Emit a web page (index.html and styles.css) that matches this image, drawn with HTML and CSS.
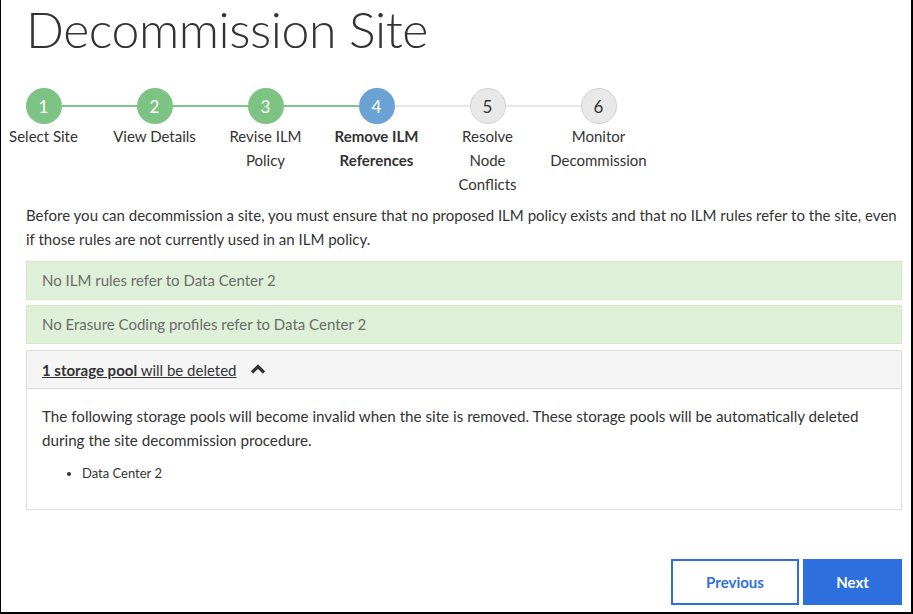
FILE: index.html
```html
<!DOCTYPE html>
<html lang="en">
<head>
<meta charset="utf-8">
<title>Decommission Site</title>
<link rel="stylesheet" href="styles.css">
</head>
<body>
<div class="frame">
  <h1 class="title">Decommission Site</h1>

  <div class="stepper">
    <div class="step done first">
      <div class="track"><span class="seg green"></span><span class="dot">1</span><span class="seg green"></span></div>
      <div class="label">Select Site</div>
    </div>
    <div class="step done">
      <div class="track"><span class="seg green"></span><span class="dot">2</span><span class="seg green"></span></div>
      <div class="label">View Details</div>
    </div>
    <div class="step done">
      <div class="track"><span class="seg green"></span><span class="dot">3</span><span class="seg green"></span></div>
      <div class="label">Revise ILM<br>Policy</div>
    </div>
    <div class="step current">
      <div class="track"><span class="seg green"></span><span class="dot">4</span><span class="seg gray"></span></div>
      <div class="label">Remove ILM<br>References</div>
    </div>
    <div class="step todo">
      <div class="track"><span class="seg gray"></span><span class="dot">5</span><span class="seg gray"></span></div>
      <div class="label">Resolve<br>Node<br>Conflicts</div>
    </div>
    <div class="step todo last">
      <div class="track"><span class="seg gray"></span><span class="dot">6</span><span class="seg"></span></div>
      <div class="label">Monitor<br>Decommission</div>
    </div>
  </div>

  <p class="intro">Before you can decommission a site, you must ensure that no proposed ILM policy exists and that no ILM rules refer to the site, even if those rules are not currently used in an ILM policy.</p>

  <div class="alert">No ILM rules refer to Data Center 2</div>
  <div class="alert">No Erasure Coding profiles refer to Data Center 2</div>

  <div class="panel">
    <div class="panel-head">
      <span class="toggle"><b>1 storage pool</b> will be deleted</span>
      <svg class="chev" width="16" height="12" viewBox="0 0 16 12" aria-hidden="true"><path d="M2 9.5 L8 3.5 L14 9.5" fill="none" stroke="#333" stroke-width="3.2" stroke-linecap="butt" stroke-linejoin="miter"/></svg>
    </div>
    <div class="panel-body">
      <p>The following storage pools will become invalid when the site is removed. These storage pools will be automatically deleted during the site decommission procedure.</p>
      <ul class="pools">
        <li>Data Center 2</li>
      </ul>
    </div>
  </div>

  <div class="actions">
    <button class="btn btn-outline">Previous</button>
    <button class="btn btn-primary">Next</button>
  </div>
</div>
</body>
</html>
```

FILE: styles.css
```css
* { box-sizing: border-box; }
html, body { margin: 0; padding: 0; background: #fff; }
body {
  font-family: "Source Sans Pro", Lato, "Liberation Sans", sans-serif;
  font-size: 16px;
  color: #333;
}
.frame {
  width: 913px;
  height: 614px;
  border: 1px solid #000;
  border-top: none;
  border-right-width: 2px;
  border-bottom-width: 2px;
  padding: 0 0 0 25px;
  display: flex;
  flex-direction: column;
  overflow: hidden;
}
.title {
  margin: 0;
  padding-top: 1px;
  font-weight: 300;
  font-size: 50px;
  line-height: 57px;
  height: 58px;
  color: #333;
  letter-spacing: -0.45px;
  white-space: nowrap;
}
.stepper {
  display: flex;
  margin: 30px 0 0 -38px;
}
.step { width: 111px; display: flex; flex-direction: column; align-items: center; }
.track { display: flex; align-items: center; width: 100%; height: 36px; }
.seg { flex: 1; height: 2px; }
.seg.green { background: #7dc383; }
.seg.gray { background: #e6e6e6; }
.first .track .seg:first-child { background: transparent; }
.dot {
  width: 36px; height: 36px; border-radius: 50%;
  display: flex; align-items: center; justify-content: center;
  font-size: 17px; color: #fff; flex: none;
}
.done .dot { background: #7dc383; }
.current .dot { background: #6aa2d4; }
.todo .dot { background: #e8e8e8; border: 1px solid #d2d2d2; color: #333; }
.label {
  margin-top: 0;
  text-align: center;
  line-height: 24px;
  font-size: 15px;
  color: #333;
}
.current .label { font-weight: 700; }
.intro {
  margin: 7px 0 10px;
  line-height: 24px;
  font-size: 15px;
  width: 880px;
  letter-spacing: 0.015px;
}
.alert {
  width: 876px;
  background: #dff0d8;
  border: 1px solid #d6e9c6;
  color: #6b6b6b;
  font-size: 15px;
  line-height: 24px;
  padding: 6px 15px 7px;
  margin-bottom: 5px;
}
.panel {
  width: 876px;
  margin-top: 1px;
  border: 1px solid #ddd;
}
.panel-head {
  background: #f5f5f5;
  border-bottom: 1px solid #ddd;
  height: 38px;
  padding: 0 15px;
  display: flex;
  align-items: center;
  gap: 13px;
  font-size: 15px;
}
.toggle { text-decoration: underline; color: #333; }
.chev { margin-top: -2px; }
.panel-body { padding: 15px 15px 27px; }
.panel-body p { margin: 0; line-height: 24px; font-size: 15.2px; }
.pools { margin: 12px 0 0; padding-left: 40px; font-size: 13px; line-height: 18px; }
.actions {
  margin-top: auto;
  margin-bottom: 7px;
  width: 876px;
  display: flex;
  justify-content: flex-end;
  gap: 4px;
}
.btn {
  height: 46px;
  font-family: inherit;
  font-size: 15px;
  font-weight: 700;
  cursor: pointer;
}
.btn-outline {
  width: 128px;
  background: #fff;
  border: 2px solid #2f6fdc;
  color: #2f6fdc;
}
.btn-primary {
  width: 99px;
  background: #2d6fdc;
  border: 2px solid #2d6fdc;
  color: #fff;
}
```
